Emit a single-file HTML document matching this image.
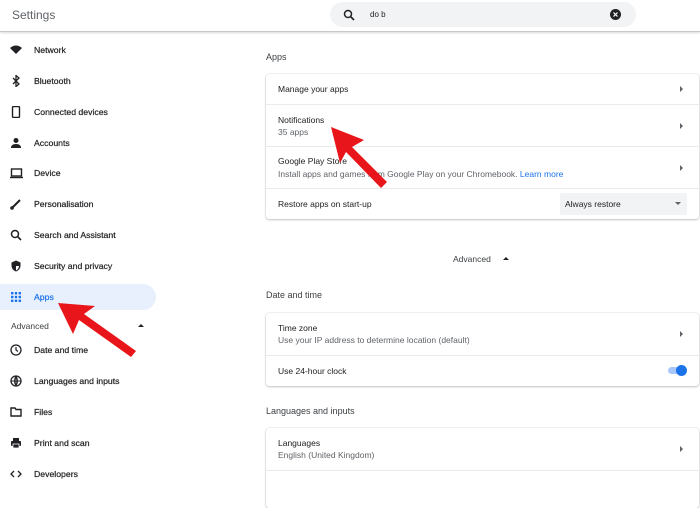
<!DOCTYPE html>
<html><head><meta charset="utf-8"><style>
*{margin:0;padding:0;box-sizing:border-box}
body{width:700px;height:481px;overflow:hidden;background:#fff;font-family:"Liberation Sans",sans-serif;color:#202124;position:relative;font-size:9px}
.hdr{position:absolute;left:0;top:0;width:700px;height:32px;border-bottom:1px solid #c8c8c8;box-shadow:0 1px 2px rgba(0,0,0,.15)}
.hdr .t{position:absolute;left:12px;top:8px;font-size:12px;color:#5f6368}
.search{position:absolute;left:330px;top:2px;width:306px;height:25px;background:#f1f3f4;border-radius:13px}
.nav{position:absolute;left:0;width:156px;height:26px}
.nav span{position:absolute;left:34px;top:50%;transform:translateY(-50%);font-size:8.7px;color:#202124;-webkit-text-stroke:0.2px #202124}
.nav svg{position:absolute;left:10px;top:50%;transform:translateY(-50%)}
.sel{background:#e8f0fe;border-radius:0 13px 13px 0}
.sel span{color:#1a73e8;-webkit-text-stroke:0.2px #1a73e8}
.h{position:absolute;left:266px;font-size:9px;color:#3c4043}
.card{position:absolute;left:266px;width:433px;border-radius:3px;box-shadow:0 0 1px rgba(0,0,0,.3),0 1px 2px rgba(0,0,0,.2);background:#fff}
.row{position:relative;border-top:1px solid #ebebeb}
.row:first-child{border-top:none}
.row .a{position:absolute;left:12px;font-size:8.5px;color:#202124}
.row .b{position:absolute;left:12px;font-size:8.5px;color:#5f6368}
.tri{position:absolute;right:16px;width:0;height:0;border-left:3px solid #5f6368;border-top:3px solid transparent;border-bottom:3px solid transparent}
</style></head><body>
<div class="hdr"><div class="t">Settings</div>
<div class="search">
<svg width="12" height="12" style="position:absolute;left:13px;top:7px" viewBox="0 0 12 12"><circle cx="5" cy="5" r="3.5" stroke="#202124" stroke-width="1.5" fill="none"/><path d="M7.5 7.5L11 11" stroke="#202124" stroke-width="1.6"/></svg>
<span style="position:absolute;left:40px;top:8px;font-size:8px;color:#202124">do b</span>
<svg width="11" height="11" style="position:absolute;left:280px;top:7px" viewBox="0 0 11 11"><circle cx="5.5" cy="5.5" r="5.5" fill="#202124"/><path d="M3.5 3.5l4 4M7.5 3.5l-4 4" stroke="#fff" stroke-width="1.2"/></svg>
</div></div>

<div class="nav" style="top:37px"><svg width="12" height="12" viewBox="0 0 12 12"><path d="M0 4Q6 -1 12 4L6 10Z" fill="#202124"/></svg><span>Network</span></div>
<div class="nav" style="top:68px"><svg width="12" height="12" viewBox="0 0 12 12"><path d="M3 3l6 6-3 2.5V.5L9 3 3 9" stroke="#202124" stroke-width="1.3" fill="none"/></svg><span>Bluetooth</span></div>
<div class="nav" style="top:99px"><svg width="12" height="12" viewBox="0 0 12 12"><rect x="2.5" y="0.5" width="7" height="11" rx="1" stroke="#202124" stroke-width="1.4" fill="none"/></svg><span>Connected devices</span></div>
<div class="nav" style="top:130px"><svg width="12" height="12" viewBox="0 0 12 12"><circle cx="6" cy="3.5" r="2.5" fill="#202124"/><path d="M1 11q0-4 5-4t5 4z" fill="#202124"/></svg><span>Accounts</span></div>
<div class="nav" style="top:160px"><svg width="13" height="12" viewBox="0 0 13 12"><rect x="1.5" y="2" width="10" height="7" stroke="#202124" stroke-width="1.4" fill="none"/><path d="M0 10.5h13" stroke="#202124" stroke-width="1.4"/></svg><span>Device</span></div>
<div class="nav" style="top:191px"><svg width="12" height="12" viewBox="0 0 12 12"><path d="M2 10L10 2" stroke="#202124" stroke-width="2"/><circle cx="2" cy="10" r="1.8" fill="#202124"/></svg><span>Personalisation</span></div>
<div class="nav" style="top:222px"><svg width="12" height="12" viewBox="0 0 12 12"><circle cx="5" cy="5" r="3.5" stroke="#202124" stroke-width="1.5" fill="none"/><path d="M7.5 7.5L11 11" stroke="#202124" stroke-width="1.6"/></svg><span>Search and Assistant</span></div>
<div class="nav" style="top:253px"><svg width="12" height="12" viewBox="0 0 12 12"><path d="M6 0.5L1.5 2.5v3c0 3 2 5.2 4.5 6 2.5-.8 4.5-3 4.5-6v-3z" fill="#202124"/><path d="M6 2v8.5c1.6-.7 3-2.4 3-4.7V6H6z" fill="#fff"/></svg><span>Security and privacy</span></div>
<div class="nav sel" style="top:284px"><svg width="12" height="12" viewBox="0 0 12 12" fill="#1a73e8"><rect x="1" y="1" width="2.4" height="2.4"/><rect x="4.8" y="1" width="2.4" height="2.4"/><rect x="8.6" y="1" width="2.4" height="2.4"/><rect x="1" y="4.8" width="2.4" height="2.4"/><rect x="4.8" y="4.8" width="2.4" height="2.4"/><rect x="8.6" y="4.8" width="2.4" height="2.4"/><rect x="1" y="8.6" width="2.4" height="2.4"/><rect x="4.8" y="8.6" width="2.4" height="2.4"/><rect x="8.6" y="8.6" width="2.4" height="2.4"/></svg><span>Apps</span></div>
<div style="position:absolute;left:11px;top:321px;font-size:8.5px;color:#3c4043">Advanced</div>
<div style="position:absolute;left:138px;top:324px;border-bottom:3px solid #202124;border-left:3px solid transparent;border-right:3px solid transparent"></div>
<div class="nav" style="top:337px"><svg width="12" height="12" viewBox="0 0 12 12"><circle cx="6" cy="6" r="5" stroke="#202124" stroke-width="1.3" fill="none"/><path d="M6 3v3l2 1.5" stroke="#202124" stroke-width="1.2" fill="none"/></svg><span>Date and time</span></div>
<div class="nav" style="top:368px"><svg width="12" height="12" viewBox="0 0 12 12"><circle cx="6" cy="6" r="5" stroke="#202124" stroke-width="1.3" fill="none"/><path d="M1 6h10M6 1v10M6 1q-3 5 0 10M6 1q3 5 0 10" stroke="#202124" stroke-width="1" fill="none"/></svg><span>Languages and inputs</span></div>
<div class="nav" style="top:399px"><svg width="12" height="12" viewBox="0 0 12 12"><path d="M1 2h4l1 1.5h5V10H1z" stroke="#202124" stroke-width="1.4" fill="none"/></svg><span>Files</span></div>
<div class="nav" style="top:430px"><svg width="12" height="12" viewBox="0 0 12 12"><rect x="3" y="1" width="6" height="3" fill="#202124"/><rect x="1" y="4" width="10" height="5" rx="1" fill="#202124"/><rect x="3" y="7" width="6" height="4" fill="#202124" stroke="#fff" stroke-width=".8"/></svg><span>Print and scan</span></div>
<div class="nav" style="top:461px"><svg width="12" height="12" viewBox="0 0 12 12"><path d="M4 3L1 6l3 3M8 3l3 3-3 3" stroke="#202124" stroke-width="1.3" fill="none"/></svg><span>Developers</span></div>

<div class="h" style="top:52px">Apps</div>
<div class="card" style="top:74px">
<div class="row" style="height:30px"><div class="a" style="top:10px">Manage your apps</div><div class="tri" style="top:12px"></div></div>
<div class="row" style="height:42px"><div class="a" style="top:10px">Notifications</div><div class="b" style="top:22px">35 apps</div><div class="tri" style="top:18px"></div></div>
<div class="row" style="height:42px"><div class="a" style="top:9px">Google Play Store</div><div class="b" style="top:22px">Install apps and games from Google Play on your Chromebook. <span style="color:#1a73e8">Learn more</span></div><div class="tri" style="top:18px"></div></div>
<div class="row" style="height:31px"><div class="a" style="top:10px">Restore apps on start-up</div>
<div style="position:absolute;left:294px;top:4px;width:127px;height:22px;background:#f1f3f4;border-radius:2px"><span style="position:absolute;left:5px;top:6px;font-size:8.5px">Always restore</span><div style="position:absolute;right:6px;top:9px;border-top:3.5px solid #5f6368;border-left:3.5px solid transparent;border-right:3.5px solid transparent"></div></div></div>
</div>

<div style="position:absolute;left:453px;top:254px;font-size:8.5px;color:#3c4043">Advanced</div>
<div style="position:absolute;left:503px;top:257px;border-bottom:3px solid #202124;border-left:3px solid transparent;border-right:3px solid transparent"></div>

<div class="h" style="top:290px">Date and time</div>
<div class="card" style="top:313px">
<div class="row" style="height:42px"><div class="a" style="top:10px">Time zone</div><div class="b" style="top:22px">Use your IP address to determine location (default)</div><div class="tri" style="top:18px"></div></div>
<div class="row" style="height:31px"><div class="a" style="top:10px">Use 24-hour clock</div>
<div style="position:absolute;left:402px;top:11px;width:17px;height:7px;border-radius:4px;background:#a8c7fa"></div><div style="position:absolute;left:410px;top:9px;width:11px;height:11px;border-radius:50%;background:#1a73e8"></div></div>
</div>

<div class="h" style="top:406px">Languages and inputs</div>
<div class="card" style="top:428px;height:80px">
<div class="row" style="height:42px"><div class="a" style="top:10px">Languages</div><div class="b" style="top:22px">English (United Kingdom)</div><div class="tri" style="top:18px"></div></div>
<div class="row" style="height:38px"></div>
</div>

<svg width="700" height="481" style="position:absolute;left:0;top:0" viewBox="0 0 700 481">
<polygon points="58,303 95,306 84,314 136,351 131,357 79,320 73,334" fill="#e8161b"/>
<polygon points="331,127 364,140 352,147 387,182 381,188 346,152 340,163" fill="#e8161b"/>
</svg>
</body></html>
